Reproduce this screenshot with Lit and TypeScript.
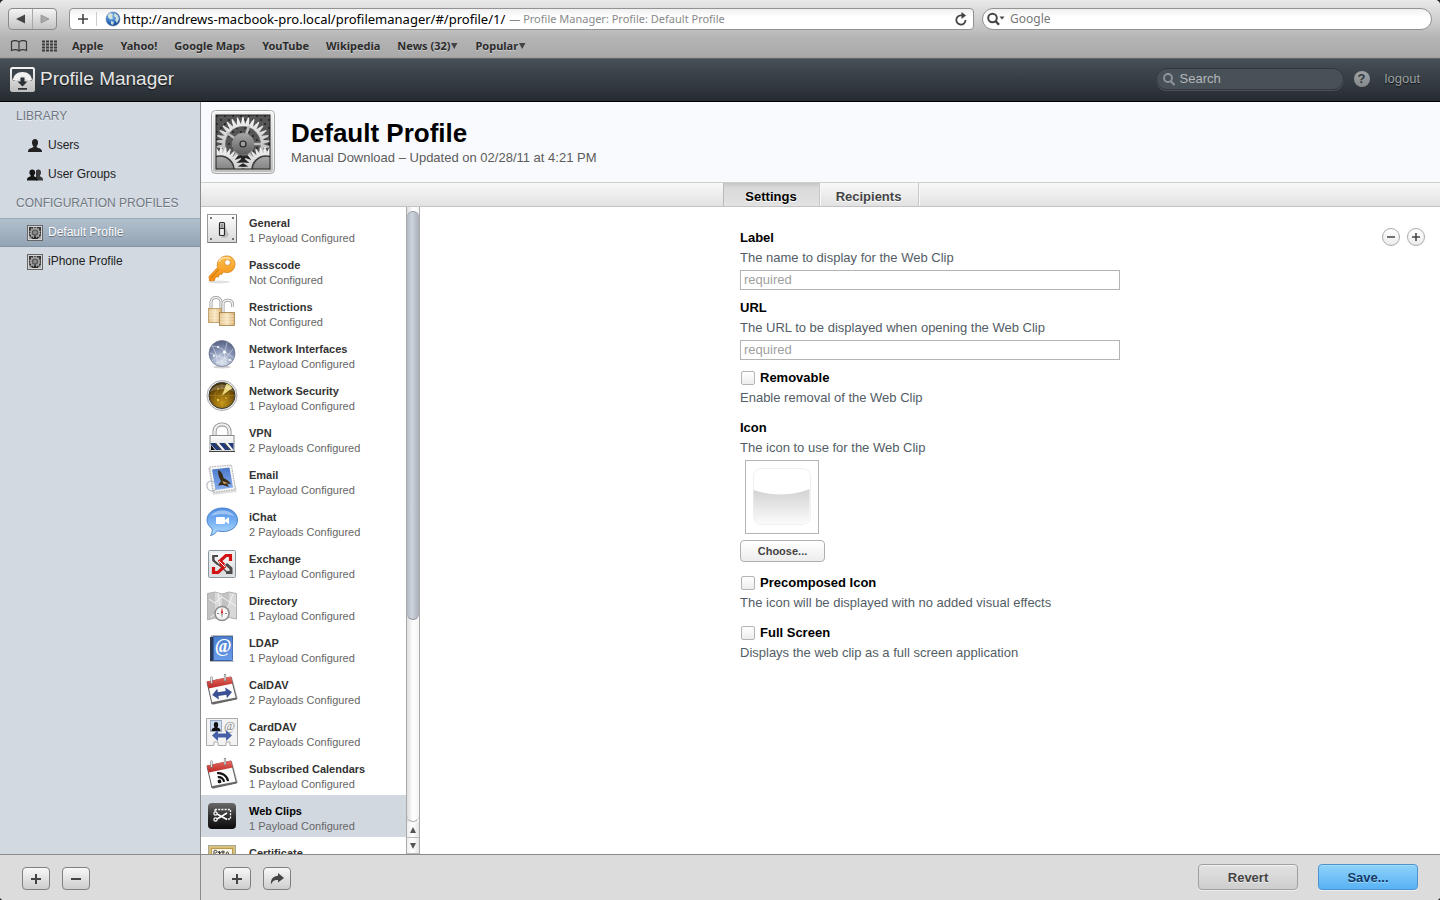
import { LitElement, html, svg, css, nothing } from "lit";
import { customElement, state } from "lit/decorators.js";
import { classMap } from "lit/directives/class-map.js";

/** Outline of a toothed wheel. */
function gear(cx: number, cy: number, outer: number, inner: number, teeth: number): string {
  const parts: string[] = [];
  const step = (Math.PI * 2) / teeth;
  for (let i = 0; i < teeth; i++) {
    const at = (r: number, o: number) => {
      const a = (i + o) * step;
      return `${(cx + r * Math.cos(a)).toFixed(2)} ${(cy + r * Math.sin(a)).toFixed(2)}`;
    };
    parts.push(`${i ? "L" : "M"}${at(inner, 0)}L${at(outer, 0.4)}L${at(outer, 0.6)}`);
  }
  return parts.join("") + "Z";
}

const defs = html`<svg class="defs" width="0" height="0" aria-hidden="true">
  <defs>
    <linearGradient id="plate" x2="0" y2="1"><stop offset="0" stop-color="#fdfdfd" /><stop offset="1" stop-color="#d9d9d9" /></linearGradient>
    <linearGradient id="frame" x2="0" y2="1"><stop offset="0" stop-color="#f4f4f4" /><stop offset="1" stop-color="#bdbdbd" /></linearGradient>
    <linearGradient id="steel" x2="0" y2="1"><stop offset="0" stop-color="#f6f6f6" /><stop offset="1" stop-color="#9a9a9a" /></linearGradient>
    <linearGradient id="hub" x2="0" y2="1"><stop offset="0" stop-color="#a8a8a8" /><stop offset="1" stop-color="#5c5c5c" /></linearGradient>
    <linearGradient id="orange" x2="0" y2="1"><stop offset="0" stop-color="#ffc14d" /><stop offset="1" stop-color="#f28a10" /></linearGradient>
    <linearGradient id="brass" x2="1" y2="0"><stop offset="0" stop-color="#e2c08a" /><stop offset=".5" stop-color="#f8e6c0" /><stop offset="1" stop-color="#d9b074" /></linearGradient>
    <radialGradient id="globe" cx=".5" cy=".85" r=".85"><stop offset="0" stop-color="#e0e6f2" /><stop offset=".55" stop-color="#8b98b8" /><stop offset="1" stop-color="#545f80" /></radialGradient>
    <radialGradient id="radar" cx=".5" cy=".8" r=".8"><stop offset="0" stop-color="#c4961a" /><stop offset=".6" stop-color="#7a5608" /><stop offset="1" stop-color="#3a2700" /></radialGradient>
    <linearGradient id="chat" x2="0" y2="1"><stop offset="0" stop-color="#4f8fe4" /><stop offset=".5" stop-color="#78b2f4" /><stop offset="1" stop-color="#b4defc" /></linearGradient>
    <linearGradient id="sky" x2="0" y2="1"><stop offset="0" stop-color="#4a78c8" /><stop offset="1" stop-color="#86aef0" /></linearGradient>
    <linearGradient id="book" x2="0" y2="1"><stop offset="0" stop-color="#4a80d0" /><stop offset="1" stop-color="#6a9ae8" /></linearGradient>
    <linearGradient id="red" x2="0" y2="1"><stop offset="0" stop-color="#e86a62" /><stop offset="1" stop-color="#b82824" /></linearGradient>
    <linearGradient id="black" x2="0" y2="1"><stop offset="0" stop-color="#6a6a6a" /><stop offset=".5" stop-color="#303030" /><stop offset="1" stop-color="#0c0c0c" /></linearGradient>
    <linearGradient id="gloss" x2="0" y2="1"><stop offset="0" stop-color="#d2d2d2" /><stop offset="1" stop-color="#fbfbfb" /></linearGradient>
    <radialGradient id="web" cx=".4" cy=".3" r=".75"><stop offset="0" stop-color="#8fc0f0" /><stop offset=".6" stop-color="#2f6fc4" /><stop offset="1" stop-color="#153e86" /></radialGradient>
    <clipPath id="gearClip"><rect x="5" y="5" width="54" height="54" /></clipPath>
    <pattern id="mesh" width="8" height="8" patternUnits="userSpaceOnUse"><rect width="8" height="8" fill="#555" /><circle cx="2" cy="2" r="1.100" fill="#222" /><circle cx="6" cy="6" r="1.100" fill="#222" /></pattern>
  </defs>
</svg>`;

const gearsArt = svg`
  <rect x=".5" y=".5" width="63" height="63" rx="4" fill="url(#frame)" stroke="#a8a8a8" />
  <rect x="1.5" y="1.5" width="61" height="61" rx="3" fill="none" stroke="#fff" stroke-opacity=".7" />
  <g clip-path="url(#gearClip)">
    <rect x="5" y="5" width="54" height="54" fill="url(#mesh)" />
    <path d=${gear(32, 34, 27, 20, 30)} fill="url(#steel)" />
    <circle cx="32" cy="34" r="17.500" fill="url(#mesh)" stroke="#666" stroke-width=".6" />
    <path d="M32 34L38 16M32 34H50M32 34L16 23M32 34L21 50M32 34L43 50" stroke="#bdbdbd" stroke-width="2.600" />
    <circle cx="32" cy="34" r="11" fill="url(#hub)" stroke="#8a8a8a" stroke-width=".5" />
    <circle cx="32" cy="34" r="3" fill="#a0a0a0" stroke="#222" stroke-width="1.200" />
    <path d="M18 59L25 46H39L46 59Z" fill="#242424" />
    <path d=${gear(10, 60, 23, 17, 30)} fill="url(#steel)" />
    <path d=${gear(54, 60, 23, 17, 30)} fill="url(#steel)" />
    <circle cx="9" cy="60" r="14" fill="url(#hub)" stroke="#3a3a3a" stroke-width="1.500" />
    <circle cx="55" cy="60" r="14" fill="url(#hub)" stroke="#3a3a3a" stroke-width="1.500" />
  </g>
  <rect x="5" y="5" width="54" height="54" fill="none" stroke="#222" />`;

const smallGear = html`<svg class="nav-icon" viewBox="0 0 16 16" aria-hidden="true">
  <rect x=".5" y=".5" width="15" height="15" fill="#d4d4d4" stroke="#666" />
  <rect x="2" y="2" width="12" height="12" fill="#333" />
  <path d=${gear(8, 7.6, 5.8, 4.4, 12)} fill="#a4a4a4" />
  <circle cx="8" cy="7.600" r="3.200" fill="#555" /><circle cx="8" cy="7.600" r="2" fill="#888" />
  <path d="M6 14L8 10L10 14Z" fill="#222" />
  <path d="M2 14v-3.500l3.500 3.500zM14 14v-3.500l-3.500 3.500z" fill="#aaa" />
</svg>`;

const person = "M8 1C10 1 11 2.4 11 4.4C11 6 10.5 7.2 9.7 8V9.2C11.5 10.2 15 10.4 15 13.5V14H1V13.5C1 10.4 4.5 10.2 6.3 9.2V8C5.5 7.2 5 6 5 4.4C5 2.4 6 1 8 1Z";
const userIcon = html`<svg class="nav-icon" viewBox="0 0 16 16" aria-hidden="true"><path d=${person} fill="#222" /></svg>`;
const groupIcon = html`<svg class="nav-icon" viewBox="0 0 16 16" aria-hidden="true">
  <path d="M11.400 2.500C13.200 2.500 14 3.700 14 5.400C14 6.700 13.600 7.600 13 8.200V9.200C14 9.900 16 10.200 16 13V13.500H9V3.500C9.600 2.800 10.400 2.500 11.400 2.500Z" fill="#3a3a3a" />
  <path d="M5.200 2.500C7 2.500 8.200 3.700 8.200 5.400C8.200 6.700 7.600 7.600 7 8.200V9.200C8.200 9.900 10.600 10.100 10.600 13V13.500H0V13C0 10.100 2.400 9.900 3.600 9.200V8.200C3 7.600 2.400 6.700 2.400 5.400C2.400 3.700 3.400 2.500 5.200 2.500Z" fill="#161616" />
</svg>`;

const calendar = svg`
  <path d="M1 10L26 3L32 25L7 31Z" fill="#555" opacity=".35" />
  <path d="M1 8L25 3L30.500 25L6 30Z" fill="#fbfbfb" stroke="#4a4a4a" stroke-width=".9" />
  <path d="M6 30L30.500 25L30.200 23.500L5.500 28.200Z" fill="#666" />
  <path d="M.800 7.500L25 2.500L26.800 9.500L2.600 14.500Z" fill="url(#red)" />
  <path d="M5.500 9V3.500M19 6.500V1" stroke="#777" stroke-width="2.200" stroke-linecap="round" />
  <path d="M5.500 8.500V3.500M19 6V1" stroke="#e4e4e4" stroke-width="1.200" stroke-linecap="round" />`;
const doubleArrow = "M6 19.5L12 14V17.500H20V14L26 19.5L20 25V21.500H12V25Z";

const art: Record<string, unknown> = {
  general: svg`
    <rect x="1.500" y="2.500" width="29" height="28" fill="url(#plate)" stroke="#999" />
    <path d="M2 30.500H30.500V3" stroke="#777" fill="none" />
    <g fill="#555"><circle cx="5" cy="6" r="1.100" /><circle cx="27" cy="6" r="1.100" /><circle cx="5" cy="27" r="1.100" /><circle cx="27" cy="27" r="1.100" /></g>
    <path d="M19 14l4 9-3 3h-5z" fill="#999" opacity=".5" />
    <rect x="13.500" y="10.500" width="5" height="13" rx="1" fill="#eee" stroke="#2a2a2a" stroke-width="1.200" />
    <rect x="14.500" y="11.500" width="3" height="4.500" fill="#999" /><path d="M14 16.500H18" stroke="#333" />`,
  passcode: svg`
    <ellipse cx="13" cy="28" rx="11" ry="1.500" fill="#000" opacity=".12" />
    <path d="M20 2C25 1.500 29 5 29 10C29 15.500 25 19 20 18.500L17.500 18L15.500 20.500L13.500 20L12.500 23L9.500 23L8.500 26.500L3.500 27L3 22.500L11.500 13.500C10 8 14 2.500 20 2Z" fill="url(#orange)" stroke="#d07808" stroke-width=".7" />
    <path d="M5 24L13 15" stroke="#c96f06" stroke-width="1" />
    <path d="M13 8C14 4 19 2.500 24 5" stroke="#ffe0a0" stroke-width="1.500" fill="none" />
    <circle cx="21.500" cy="8.500" r="2.900" fill="#fff" stroke="#c97a10" stroke-width=".7" />`,
  restrictions: svg`
    <path d="M5 14V6C5 0 15 0 15 6V14" fill="none" stroke="#999" stroke-width="3" /><path d="M5 14V6C5 0 15 0 15 6V14" fill="none" stroke="#eee" stroke-width="1.500" />
    <path d="M17 17V8C17 3 26 3 26.500 8V11" fill="none" stroke="#999" stroke-width="3" /><path d="M17 17V8C17 3 26 3 26.500 8V11" fill="none" stroke="#f2f2f2" stroke-width="1.500" />
    <rect x="2.500" y="12.500" width="13" height="14" fill="url(#brass)" stroke="#b8945c" stroke-width=".8" />
    <rect x="13.500" y="16.500" width="15" height="13" fill="url(#brass)" stroke="#a07c46" stroke-width=".8" />
    <path d="M14 20H28M14 23H28M14 26H28M3 16H13M3 19H13M3 22H13" stroke="#fff4dc" stroke-width=".6" />`,
  network: svg`
    <ellipse cx="16" cy="29" rx="9" ry="1.500" fill="#000" opacity=".18" />
    <circle cx="16" cy="15.500" r="13" fill="url(#globe)" stroke="#66708c" stroke-width=".7" />
    <path d="M6 8C12 8 19 12 18.500 14C14 17 8 21 6 23M18.500 14C22 16 27 19 28 20M18.500 14C18 19 20 25 20 27M18.500 14C20 9 21 6 21 4M4 15C10 17 22 22 26 23M10 25C14 24 20 21 27 11M6 8C10 14 12 22 11 26" stroke="#eef2fb" stroke-width=".7" fill="none" opacity=".75" />
    <g fill="#fff"><circle cx="18.500" cy="14" r="1.600" /><circle cx="8" cy="18" r="1" /><circle cx="24" cy="22" r="1" /><circle cx="12" cy="9" r="1" /></g>`,
  security: svg`
    <circle cx="16" cy="15.500" r="15" fill="#ececec" stroke="#999" stroke-width=".8" />
    <circle cx="16" cy="15.500" r="13" fill="url(#radar)" stroke="#333" stroke-width="1" />
    <path d="M16 15.500L20.500 3.400A13 13 0 0 1 26.500 8Z" fill="#f7e88a" opacity=".9" />
    <path d="M3 15.500H29M16 3V28" stroke="#d9b13a" stroke-width=".5" opacity=".5" /><circle cx="16" cy="15.500" r="7" fill="none" stroke="#d9b13a" stroke-width=".5" opacity=".5" />
    <path d="M4 12C8 2 24 2 28 12C22 8 10 8 4 12Z" fill="#fff" opacity=".22" />
    <g fill="#ffd850"><circle cx="12" cy="20" r="1" /><circle cx="20" cy="18" r=".8" /><circle cx="12" cy="9" r=".8" /></g>`,
  vpn: svg`
    <path d="M8.500 15V9.500C8.500 0 23.500 0 23.500 9.500V15" fill="none" stroke="#888" stroke-width="4" /><path d="M8.500 15V9.500C8.500 0 23.500 0 23.500 9.500V15" fill="none" stroke="#eee" stroke-width="2.400" />
    <rect x="4" y="13.500" width="24" height="16" fill="url(#plate)" stroke="#888" />
    <rect x="4.500" y="21" width="23" height="7" fill="#f4f4f4" />
    <path d="M4.500 21H9L15 28H10L4.500 22ZM13 21H18L24 28H19ZM22 21H27.500V28Z" fill="#223a78" />
    <path d="M5 23L9 28H5ZM9 21H10L16 28H15ZM18 21L24 28H25L19 21Z" fill="#111" /><path d="M3 29.500H29" stroke="#444" />`,
  email: svg`
    <path d="M2 4L25 1L31 28L7 31Z" fill="#000" opacity=".12" />
    <path d="M3.500 3L25.500 1L29.500 25.500L7.500 28.500Z" fill="#f4f4f4" stroke="#aaa" stroke-width="1" stroke-dasharray="1.500 1" />
    <path d="M6 5.500L23.500 3.500L27 23.500L9.500 26Z" fill="url(#sky)" />
    <path d="M12 6C15 7 17 10 17.500 14C20 15 23 17 25 20L21 19.500L23 23L17 21L12 21.500L15 17C13 14 12 10 12 6Z" fill="#3a2a18" />
    <path d="M16 17L22 19L18 20Z" fill="#c8a060" />
    <path d="M8 18C3 15-1 20 2 25C4 28 9 28 10 24" fill="none" stroke="#a8acb8" stroke-width="1.200" opacity=".8" />`,
  ichat: svg`
    <path d="M16.500 2C25 2 31.500 7 31.500 14C31.500 21 25 25.500 17 25.500C14 25.500 13 25.200 11.500 24.800C9.500 27.500 7 29 4.500 29.500C6 27.500 6.500 25.500 6 22.500C3 20.500 1 17.500 1 14C1 7 8 2 16.500 2Z" fill="url(#chat)" stroke="#3f78c4" stroke-width=".9" />
    <path d="M5 10C8 2.500 25 2.500 28 10C22 7.500 11 7.500 5 10Z" fill="#fff" opacity=".4" />
    <rect x="10" y="11" width="9" height="7" rx="1" fill="#fff" /><path d="M19 14L23 11V18L19 15.500Z" fill="#fff" />`,
  exchange: svg`
    <rect x="2.500" y="2.500" width="27" height="27" rx="1" fill="url(#plate)" stroke="#8a98a0" />
    <rect x="4" y="4" width="24" height="24" fill="none" stroke="#dfe6ea" />
    <g fill="none">
      <path d="M11 8H7V12L22 25" stroke="#4a4a4a" stroke-width="1.400" />
      <path d="M12 8H7.500V12.500L12 16.500" stroke="#4a4a4a" stroke-width="2.200" />
      <path d="M20 24.500H25V20.500L20 16" stroke="#4a4a4a" stroke-width="3" />
      <path d="M24.500 13V7.500H20L14 13L18 17" stroke="#d01414" stroke-width="3.200" />
      <path d="M7.500 19V24.500H12L18 19L14 15" stroke="#d01414" stroke-width="3.200" />
      <path d="M13 13L19 19" stroke="#fff" stroke-width="1" />
    </g>`,
  directory: svg`
    <path d="M1.500 3.500L9 2L16 4L23 2L30.500 3.500V29L23 27.500L16 30L9 28L1.500 30Z" fill="#d8d8d8" stroke="#999" stroke-width=".7" />
    <path d="M9 2V28L1.500 30V3.500ZM23 2V27.500L16 30V4Z" fill="#b4b4b4" opacity=".6" />
    <path d="M3 9L9 13L16 7L30 16M12 3L14 20L5 27M27 4L20 22" stroke="#f4f4f4" stroke-width="1" fill="none" />
    <circle cx="16" cy="23.500" r="7" fill="#f6f6f6" stroke="#8e8e8e" stroke-width="1.600" /><path d="M16 17.500L17.200 23.500H14.800Z" fill="#d42020" /><path d="M16 29L17.200 23.500H14.800Z" fill="#aaa" /><path d="M11 23.500H13M19 23.500H21" stroke="#888" />`,
  ldap: svg`
    <path d="M4 6L6 3H27L25 29H5Z" fill="#1c2f58" />
    <path d="M4 6L6 3H27V5H6Z" fill="#bbb" /><rect x="4" y="5" width="4" height="24" fill="#2a3a58" />
    <rect x="7.500" y="4.500" width="19" height="24" fill="url(#book)" stroke="#3560a8" stroke-width=".8" />
    <path d="M4 29.500H28" stroke="#bbb" />
    <text x="17" y="20" text-anchor="middle" class="at-light">@</text>`,
  caldav: svg`${calendar}<path d=${doubleArrow} fill="#3b4f94" transform="rotate(-9 16 19)" />`,
  carddav: svg`
    <path d="M.500 2.500H31.500V29.500H24V26H20V29.500H12V26H8V29.500H.500Z" fill="#f3f3f3" stroke="#aaa" />
    <rect x="4.500" y="4.500" width="11" height="11" fill="#ccdcf0" stroke="#9aaac0" />
    <path d="M10 6C12 6 12.500 8 12 10L11.500 11.500C13 12 14.500 12.500 14.500 15H5.500C5.500 12.500 7 12 8.500 11.500L8 10C7.500 8 8 6 10 6Z" fill="#111" />
    <text x="23.500" y="14" text-anchor="middle" class="at-gray">@</text>
    <path d=${doubleArrow} fill="#4560a8" />`,
  subscribed: svg`${calendar}
    <g fill="none" stroke="#111" stroke-width="2.200" transform="rotate(-9 16 20)"><path d="M12 14.500C17 14.500 21.500 18.500 21.500 24" /><path d="M12 18.500C15 18.500 17.500 21 17.500 24" /><circle cx="13" cy="23" r=".8" fill="#111" /></g>`,
  webclips: svg`
    <rect x="2" y="3" width="28" height="26" rx="4" fill="url(#black)" />
    <path d="M9 9.500H24.500V19H20M9 9.500V12" fill="none" stroke="#fff" stroke-width="1.300" stroke-dasharray="2 1.200" />
    <path d="M11 14L21 19.500M11 19L21 13" stroke="#fff" stroke-width="1.500" /><circle cx="9.500" cy="13.500" r="1.600" fill="none" stroke="#fff" stroke-width="1.200" /><circle cx="9.500" cy="19.500" r="1.600" fill="none" stroke="#fff" stroke-width="1.200" />`,
  certificate: svg`
    <rect x="2.500" y="3.500" width="27" height="24" fill="#d9c078" stroke="#a8a89a" />
    <rect x="5.500" y="6.500" width="21" height="18" fill="#faf6e4" stroke="#b89a50" />
    <path d="M8 12V9C8 8 11 8 11 9.500S9 11 9 11M12 11L13.500 9V12L15.500 9.500M17 12V8.500M15.500 10H19M20 12C21 9 22 9 22.500 12" stroke="#333" fill="none" />
    <path d="M8 16H24M8 19H24" stroke="#aaa" />`,
};

interface Payload { id: string; name: string; note: string; }
const one = "1 Payload Configured";
const two = "2 Payloads Configured";
const none = "Not Configured";
const payloads: Payload[] = [
  { id: "general", name: "General", note: one },
  { id: "passcode", name: "Passcode", note: none },
  { id: "restrictions", name: "Restrictions", note: none },
  { id: "network", name: "Network Interfaces", note: one },
  { id: "security", name: "Network Security", note: one },
  { id: "vpn", name: "VPN", note: two },
  { id: "email", name: "Email", note: one },
  { id: "ichat", name: "iChat", note: two },
  { id: "exchange", name: "Exchange", note: one },
  { id: "directory", name: "Directory", note: one },
  { id: "ldap", name: "LDAP", note: one },
  { id: "caldav", name: "CalDAV", note: two },
  { id: "carddav", name: "CardDAV", note: two },
  { id: "subscribed", name: "Subscribed Calendars", note: one },
  { id: "webclips", name: "Web Clips", note: one },
  { id: "certificate", name: "Certificate", note: one },
];

const bookmarks = ["Apple", "Yahoo!", "Google Maps", "YouTube", "Wikipedia"];
const bookmarkMenus = ["News (32)", "Popular"];

const plus = html`<svg width="12" height="12" viewBox="0 0 12 12" aria-hidden="true"><path d="M1 6H11M6 1V11" stroke="#444" stroke-width="2" /></svg>`;
const minus = html`<svg width="12" height="12" viewBox="0 0 12 12" aria-hidden="true"><path d="M1 6H11" stroke="#444" stroke-width="2" /></svg>`;

@customElement("app-root")
export class AppRoot extends LitElement {
  @state() private selected = "webclips";

  static styles = css`
    :host { display: block; height: 100vh; background: #222; font: 13px/20px "Liberation Sans", Arial, sans-serif; color: #000; }
    * { box-sizing: border-box; }
    button, input { font: inherit; color: inherit; margin: 0; padding: 0; border: 0; background: none; min-width: 0; }
    a { color: inherit; text-decoration: none; }
    h1, h2, p, ul { margin: 0; padding: 0; font: inherit; list-style: none; }
    svg { display: block; flex: none; }
    .defs { position: absolute; }
    .window { height: 100%; display: flex; flex-direction: column; overflow: hidden; border-radius: 5px 5px 4px 4px; background: #fff; }

    .chrome { flex: none; background: linear-gradient(#e9e9e9, #cfcfcf 20px, #b4b4b4 38px, #a9a9a9); border-bottom: 1px solid #a0a0a0; font-family: "Noto Sans", "Open Sans", sans-serif; }
    .bar { display: flex; align-items: center; padding: 8px 8px 0; }
    .nav-buttons { display: flex; width: 49px; height: 22px; border: 1px solid #8a8a8a; border-radius: 4px; background: linear-gradient(#f4f4f4, #c4c4c4); }
    .nav-buttons button { flex: 1; display: grid; place-items: center; }
    .nav-buttons button + button { border-left: 1px solid #a8a8a8; }
    .address { flex: 1; display: flex; align-items: center; height: 22px; margin: 0 8px 0 12px; border: 1px solid #929292; border-radius: 4px; background: linear-gradient(#f0f0f0, #fff 8px); white-space: nowrap; }
    .add { display: grid; place-items: center; width: 27px; height: 14px; border-right: 1px solid #ccc; }
    .globe { margin: 0 2px 0 8px; }
    .url { color: #000; font-size: 13px; }
    .page-title { flex: 1; margin-left: 4px; color: #888; font-size: 11px; }
    .reload { margin-right: 6px; }
    .google { flex: none; display: flex; align-items: center; gap: 5px; width: 450px; height: 22px; padding: 0 4px; border: 1px solid #929292; border-radius: 11px; background: linear-gradient(#f0f0f0, #fff 8px); color: #777; }
    .google input { flex: 1; font-size: 12px; }
    input::placeholder { color: inherit; opacity: 1; }
    .links { display: flex; align-items: center; height: 27px; padding: 6px 10px 1px; gap: 17px; font-size: 11px; font-weight: 700; line-height: 20px; color: #2c2c2c; text-shadow: 0 1px 0 #ccc; white-space: nowrap; }
    .links .icons { display: flex; gap: 14px; margin-right: -2px; }
    .menu-link { display: flex; align-items: center; }

    .masthead { flex: none; display: flex; align-items: center; height: 44px; padding: 0 20px 2px 10px; border-top: 1px solid #5f666b; border-bottom: 1px solid #000; background: linear-gradient(#475057, #252b31); color: #e6e6e6; text-shadow: 0 1px 1px #111; }
    .brand { flex: 1; margin-left: 5px; font-size: 19px; }
    .search { display: flex; align-items: center; gap: 5px; width: 188px; height: 22px; padding: 0 6px; border: 1px solid #32383e; border-radius: 11px; background: #495158; box-shadow: 0 1px 0 #4a5158; color: #b4b7ba; }
    .search input { flex: 1; }
    .help { display: grid; place-items: center; width: 16px; height: 16px; margin: 0 15px 0 10px; border-radius: 50%; background: linear-gradient(#9fa3a6, #85898c); color: #31383e; font-size: 13px; line-height: 16px; font-weight: 700; text-shadow: none; }
    .logout { color: #9ba0a4; }

    .body { flex: 1; min-height: 0; display: flex; }
    .sidebar { flex: none; width: 201px; border-right: 1px solid #8a8a8a; background: #d2d9e1; font-size: 12px; color: #222; text-shadow: 0 1px 0 #e8edf2; }
    .sidebar h2 { height: 29px; padding: 0 16px; line-height: 28px; color: #6f777f; white-space: nowrap; }
    .nav { display: flex; align-items: center; gap: 5px; width: 100%; height: 29px; padding: 0 27px; line-height: 27px; text-align: left; }
    .nav-icon { width: 16px; height: 16px; }
    .nav.on { border-top: 1px solid #9aabbb; border-bottom: 1px solid #8395a6; background: linear-gradient(#b2c0cd, #93a4b5); color: #fff; text-shadow: 0 1px 1px #5e6c7a; }

    .main { flex: 1; min-width: 0; display: flex; flex-direction: column; background: #fff; }
    .profile { flex: none; display: flex; gap: 16px; height: 80px; padding: 8px 10px; background: #f9fafd; }
    .profile h1 { margin-top: 8px; font-size: 26px; font-weight: 700; line-height: 30px; }
    .profile p { line-height: 20px; color: #5c5c5c; }
    .tabs { flex: none; display: flex; justify-content: center; height: 25px; border-top: 1px solid #cfcfcf; border-bottom: 1px solid #c4c4c4; background: linear-gradient(#f8f8f8, #e2e2e2); }
    .tab { width: 99px; border-right: 1px solid #c8c8c8; box-shadow: 1px 0 0 #f8f8f8; font-weight: 700; line-height: 23px; padding-top: 2px; color: #444; text-shadow: 0 1px 0 #fff; }
    .tab.on { width: 97px; border-left: 1px solid #bbb; background: linear-gradient(#c6c6c6, #dadada 5px, #e2e2e2); color: #000; }
    .content { flex: 1; min-height: 0; display: flex; }
    .payloads { flex: none; width: 205px; overflow: hidden; }
    .payload { display: flex; align-items: center; gap: 11px; width: 100%; height: 42px; padding: 0 5px; text-align: left; font-size: 11px; line-height: 15px; color: #666; white-space: nowrap; }
    .payload strong { display: block; color: #333; }
    .payload span { padding-top: 6px; }
    .payload.on { background: #d2d8e0; }
    .payload.on strong { color: #000; }
    .at-light { font: 700 18px "Liberation Serif", serif; fill: #fff; }
    .at-gray { font: 12px "Liberation Serif", serif; fill: #888; }
    .scroll { flex: none; display: flex; flex-direction: column; width: 14px; border: 1px solid #aaa; border-width: 0 1px; background: linear-gradient(90deg, #ddd, #fff 50%, #f4f4f4); }
    .track { flex: 1; padding-top: 4px; border-bottom: 1px solid #aaa; border-radius: 0 0 7px 7px; }
    .thumb { height: 67%; border: 1px solid #8f959d; border-width: 1px 0; border-radius: 7px; background: linear-gradient(90deg, #b0b6c0, #ced4de 40%, #a9afb9); }
    .scroll button { display: grid; place-items: center; height: 16px; border-bottom: 1px solid #bbb; background: linear-gradient(90deg, #eee, #fff, #e4e4e4); }

    .pane { flex: 1; min-width: 0; display: grid; grid-template-columns: 1fr 380px 1fr; padding-top: 21px; }
    .form { grid-column: 2; }
    .tools { display: flex; justify-content: flex-end; gap: 7px; padding: 0 15px; }
    .round { display: grid; place-items: center; width: 18px; height: 18px; border: 1px solid #aaa; border-radius: 50%; background: linear-gradient(#fff, #ececec); }
    .field { margin-bottom: 8px; }
    .field.wide { margin-bottom: 10px; }
    .title { display: flex; align-items: center; gap: 5px; height: 20px; font-weight: 700; }
    .hint { color: #535d66; }
    .text { display: block; width: 100%; height: 20px; margin-top: 2px; padding: 0 3px; border: 1px solid #b4b4b4; color: #a0a0a0; }
    .check { appearance: none; width: 14px; height: 14px; margin-left: 1px; border: 1px solid #b4b4b4; border-radius: 2px; background: linear-gradient(#fff, #ededed); }
    .well { width: 74px; height: 74px; margin: 2px 5px 6px; padding: 6px; border: 1px solid #b4b4b4; }
    .choose { width: 85px; height: 22px; margin-bottom: 3px; border: 1px solid #b0b0b0; border-radius: 4px; background: linear-gradient(#fff, #ededed); font-size: 11px; font-weight: 700; color: #444; }

    .footer { flex: none; display: flex; height: 46px; border-top: 1px solid #8a8a8a; background: #dcdcdc; }
    .side-actions { flex: none; display: flex; gap: 12px; width: 201px; padding: 12px 22px; border-right: 1px solid #8a8a8a; }
    .main-actions { flex: 1; display: flex; gap: 12px; padding: 9px 22px; }
    .main-actions .small { margin-top: 3px; }
    .small { display: grid; place-items: center; width: 28px; height: 23px; border: 1px solid #808080; border-radius: 4px; background: linear-gradient(#f8f8f8, #cdcdcd); }
    .big { width: 100px; height: 26px; padding-top: 1px; border: 1px solid #a0a0a0; border-radius: 4px; background: linear-gradient(#e2e2e2, #cecece); box-shadow: inset 0 1px 0 #f4f4f4, 0 1px 0 #eee; font-weight: 700; color: #444; text-shadow: 0 1px 0 #eee; }
    .revert { margin-left: auto; }
    .save { margin-left: 8px; border-color: #4a94d4; background: linear-gradient(#8fd2fa, #58b2f4); box-shadow: inset 0 1px 0 #a8dcfc, 0 1px 0 #eee; color: #123a66; text-shadow: 0 1px 0 #a0d8fc; }
  `;

  private checkField(id: string, title: string, hint: string) {
    return html`<div class="field wide">
      <label class="title" for=${id}><input class="check" type="checkbox" id=${id} />${title}</label>
      <p class="hint">${hint}</p>
    </div>`;
  }

  private textField(id: string, title: string, hint: string) {
    return html`<div class="field">
      <label class="title" for=${id}>${title}</label>
      <p class="hint">${hint}</p>
      <input class="text" id=${id} placeholder="required" />
    </div>`;
  }

  private renderChrome() {
    return html`<div class="chrome">
      <div class="bar">
        <div class="nav-buttons">
          <button aria-label="Back"><svg width="10" height="10" viewBox="0 0 10 10"><path d="M9 .500V9.500L0 5Z" fill="#444" /></svg></button>
          <button aria-label="Forward"><svg width="10" height="10" viewBox="0 0 10 10"><path d="M1 1V9L9 5Z" fill="#aaa" stroke="#888" stroke-width=".7" /></svg></button>
        </div>
        <div class="address">
          <button class="add" aria-label="Add bookmark"><svg width="12" height="12" viewBox="0 0 12 12"><path d="M1 6H11M6 1V11" stroke="#444" stroke-width="1.600" /></svg></button>
          <svg class="globe" width="16" height="16" viewBox="0 0 16 16" aria-hidden="true">
            <circle cx="8" cy="8" r="7" fill="url(#web)" stroke="#5a7eb0" stroke-width=".6" />
            <path d="M2.500 4L5 2L8 3L7 5.500L8 7.500L6 8.500L3.500 7ZM9.500 2L13 4.500L14 8L12 12L10 9L11 7L9 5ZM6 10L9 11L8 14L6 13Z" fill="#dcebd8" opacity=".9" />
          </svg>
          <span class="url">http://andrews-macbook-pro.local/profilemanager/#/profile/1/</span>
          <span class="page-title">— Profile Manager: Profile: Default Profile</span>
          <button class="reload" aria-label="Reload"><svg width="12" height="14" viewBox="0 0 12 14"><path d="M10.500 8A4.600 4.600 0 1 1 6 3.400H8" fill="none" stroke="#444" stroke-width="1.800" /><path d="M6.500 0L11 3.500L6.500 7Z" fill="#444" /></svg></button>
        </div>
        <label class="google">
          <svg width="18" height="14" viewBox="0 0 18 14" aria-hidden="true"><circle cx="5.500" cy="6" r="4.300" fill="none" stroke="#444" stroke-width="2" /><path d="M8.500 9L12 12.800" stroke="#444" stroke-width="2.400" /><path d="M12.500 4.500H17.500L15 7.500Z" fill="#444" /></svg>
          <input aria-label="Google" placeholder="Google" />
        </label>
      </div>
      <div class="links">
        <div class="icons">
          <svg width="18" height="12" viewBox="0 0 18 12" aria-hidden="true"><path d="M9 2C7 0 3.500 .300 1.500 1.500V10.500C4 9.500 7 9.500 9 11C11 9.500 14 9.500 16.500 10.500V1.500C14.500 .300 11 0 9 2V11" fill="none" stroke="#3a3a3a" stroke-width="1.200" /></svg>
          <svg width="15" height="12" viewBox="0 0 15 12" aria-hidden="true"><path d="M0 1.500H15M0 4.500H15M0 7.500H15M0 10.500H15" stroke="#3a3a3a" stroke-width="2" stroke-dasharray="3 1" /></svg>
        </div>
        ${bookmarks.map((b) => html`<a href="#">${b}</a>`)}
        ${bookmarkMenus.map((b) => html`<a class="menu-link" href="#">${b}<svg width="8" height="6" viewBox="0 0 8 6" aria-hidden="true"><path d="M1 0H7.500L4.200 6Z" fill="#444" /></svg></a>`)}
      </div>
    </div>`;
  }

  private renderMasthead() {
    return html`<header class="masthead">
      <svg width="25" height="25" viewBox="0 0 25 25" aria-hidden="true">
        <rect width="25" height="25" rx="2.500" fill="url(#frame)" />
        <path d="M2 11V3C2 2.300 2.300 2 3 2H22C22.700 2 23 2.300 23 3V11L22 13.500H20.500C20 9 17 6 12.500 6S5 9 4.500 13.500H3Z" fill="#3b434a" />
        <path d="M3 13C3.500 8 7 5 12.500 5S21.500 8 22 13H17L12.500 9L8 13Z" fill="#f0f0f0" />
        <path d="M10.500 10.500H14.500V14.500H17.500L12.500 19.500L7.500 14.500H10.500ZM8 21H17V22.800H8Z" fill="#2c3238" />
      </svg>
      <div class="brand">Profile Manager</div>
      <label class="search">
        <svg width="12" height="13" viewBox="0 0 12 13" aria-hidden="true"><circle cx="5" cy="5" r="4" fill="none" stroke="#90969b" stroke-width="1.800" /><path d="M8 8.500L11.500 12" stroke="#90969b" stroke-width="2" /></svg>
        <input type="text" aria-label="Search" placeholder="Search" />
      </label>
      <button class="help" aria-label="Help">?</button>
      <a class="logout" href="#">logout</a>
    </header>`;
  }

  render() {
    return html`${defs}
      <div class="window">
        ${this.renderChrome()} ${this.renderMasthead()}
        <div class="body">
          <nav class="sidebar">
            <h2>LIBRARY</h2>
            <button class="nav">${userIcon}Users</button>
            <button class="nav">${groupIcon}User Groups</button>
            <h2>CONFIGURATION PROFILES</h2>
            <button class="nav on">${smallGear}Default Profile</button>
            <button class="nav">${smallGear}iPhone Profile</button>
          </nav>
          <main class="main">
            <div class="profile">
              <svg width="64" height="64" viewBox="0 0 64 64" aria-hidden="true">${gearsArt}</svg>
              <div>
                <h1>Default Profile</h1>
                <p>Manual Download – Updated on 02/28/11 at 4:21 PM</p>
              </div>
            </div>
            <div class="tabs" role="tablist">
              <button class="tab on" role="tab" aria-selected="true">Settings</button>
              <button class="tab" role="tab" aria-selected="false">Recipients</button>
            </div>
            <div class="content">
              <div class="payloads">
                ${payloads.map(
                  (p) => html`<button
                    class=${classMap({ payload: true, on: p.id === this.selected })}
                    aria-current=${p.id === this.selected ? "true" : nothing}
                    @click=${() => (this.selected = p.id)}
                  >
                    <svg width="32" height="32" viewBox="0 0 32 32" aria-hidden="true">${art[p.id]}</svg>
                    <span><strong>${p.name}</strong>${p.note}</span>
                  </button>`,
                )}
              </div>
              <div class="scroll">
                <div class="track"><div class="thumb"></div></div>
                <button aria-label="Scroll up"><svg width="6" height="6" viewBox="0 0 6 6"><path d="M3 0L6 6H0Z" fill="#555" /></svg></button>
                <button aria-label="Scroll down"><svg width="6" height="6" viewBox="0 0 6 6"><path d="M3 6L6 0H0Z" fill="#555" /></svg></button>
              </div>
              <div class="pane">
                <form class="form">
                  ${this.textField("clip-label", "Label", "The name to display for the Web Clip")}
                  ${this.textField("clip-url", "URL", "The URL to be displayed when opening the Web Clip")}
                  ${this.checkField("removable", "Removable", "Enable removal of the Web Clip")}
                  <div class="field">
                    <label class="title" for="choose-icon">Icon</label>
                    <p class="hint">The icon to use for the Web Clip</p>
                    <div class="well">
                      <svg width="60" height="60" viewBox="0 0 60 60" aria-hidden="true">
                        <rect x="1.500" y="1.500" width="57" height="56" rx="8" fill="#fff" stroke="#f0f0f0" />
                        <path d="M1.500 23C18 29 42 29 57.500 22V49C57.500 54 54 57 49 57H10C5 57 1.500 54 1.500 49Z" fill="url(#gloss)" />
                      </svg>
                    </div>
                    <button class="choose" type="button" id="choose-icon">Choose...</button>
                  </div>
                  ${this.checkField("precomposed", "Precomposed Icon", "The icon will be displayed with no added visual effects")}
                  ${this.checkField("full-screen", "Full Screen", "Displays the web clip as a full screen application")}
                </form>
                <div class="tools">
                  <button class="round" aria-label="Remove payload"><svg width="8" height="8" viewBox="0 0 8 8"><path d="M0 4H8" stroke="#444" stroke-width="1.600" /></svg></button>
                  <button class="round" aria-label="Add payload"><svg width="8" height="8" viewBox="0 0 8 8"><path d="M0 4H8M4 0V8" stroke="#444" stroke-width="1.600" /></svg></button>
                </div>
              </div>
            </div>
          </main>
        </div>
        <footer class="footer">
          <div class="side-actions">
            <button class="small" aria-label="Add profile">${plus}</button>
            <button class="small" aria-label="Remove profile">${minus}</button>
          </div>
          <div class="main-actions">
            <button class="small" aria-label="Add">${plus}</button>
            <button class="small" aria-label="Share"><svg width="14" height="12" viewBox="0 0 14 12"><path d="M8 0L14 5L8 9.500V7C5 6.500 2.500 7.500 1 11.500C.500 6 3.500 3 8 2.800Z" fill="#444" /></svg></button>
            <button class="big revert">Revert</button>
            <button class="big save">Save...</button>
          </div>
        </footer>
      </div>`;
  }
}
